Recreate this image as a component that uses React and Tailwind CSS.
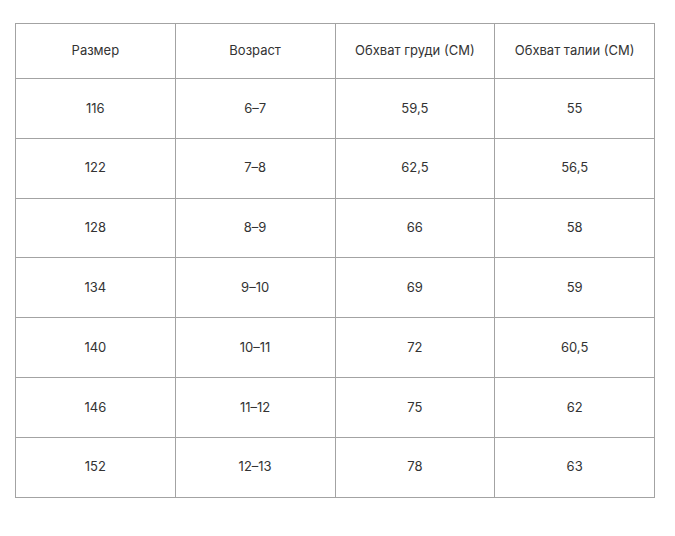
import React from "react";

const rows = [
  ["116", "6-7", "59,5", "55"],
  ["122", "7-8", "62,5", "56,5"],
  ["128", "8-9", "66", "58"],
  ["134", "9-10", "69", "59"],
  ["140", "10-11", "72", "60,5"],
  ["146", "11-12", "75", "62"],
  ["152", "12-13", "78", "63"],
];

const head = ["Размер", "Возраст", "Обхват груди (СМ)", "Обхват талии (СМ)"];

export default function App() {
  return (
    <div className="w-[675px] h-[536px] bg-white pt-[23px] pl-[15px] font-['Inter',sans-serif] text-[13px] text-[#333]">
      <table className="w-[640px] border-collapse table-fixed">
        <thead>
          <tr className="h-[55px]">
            {head.map((h) => (
              <th key={h} className="border border-[#a3a3a3] font-normal text-center p-0">
                {h}
              </th>
            ))}
          </tr>
        </thead>
        <tbody>
          {rows.map((r) => (
            <tr key={r[0]} className="h-[59.8px]">
              {r.map((c, i) => (
                <td key={i} className="border border-[#a3a3a3] text-center p-0">
                  {c.replace("-", "–")}
                </td>
              ))}
            </tr>
          ))}
        </tbody>
      </table>
    </div>
  );
}
